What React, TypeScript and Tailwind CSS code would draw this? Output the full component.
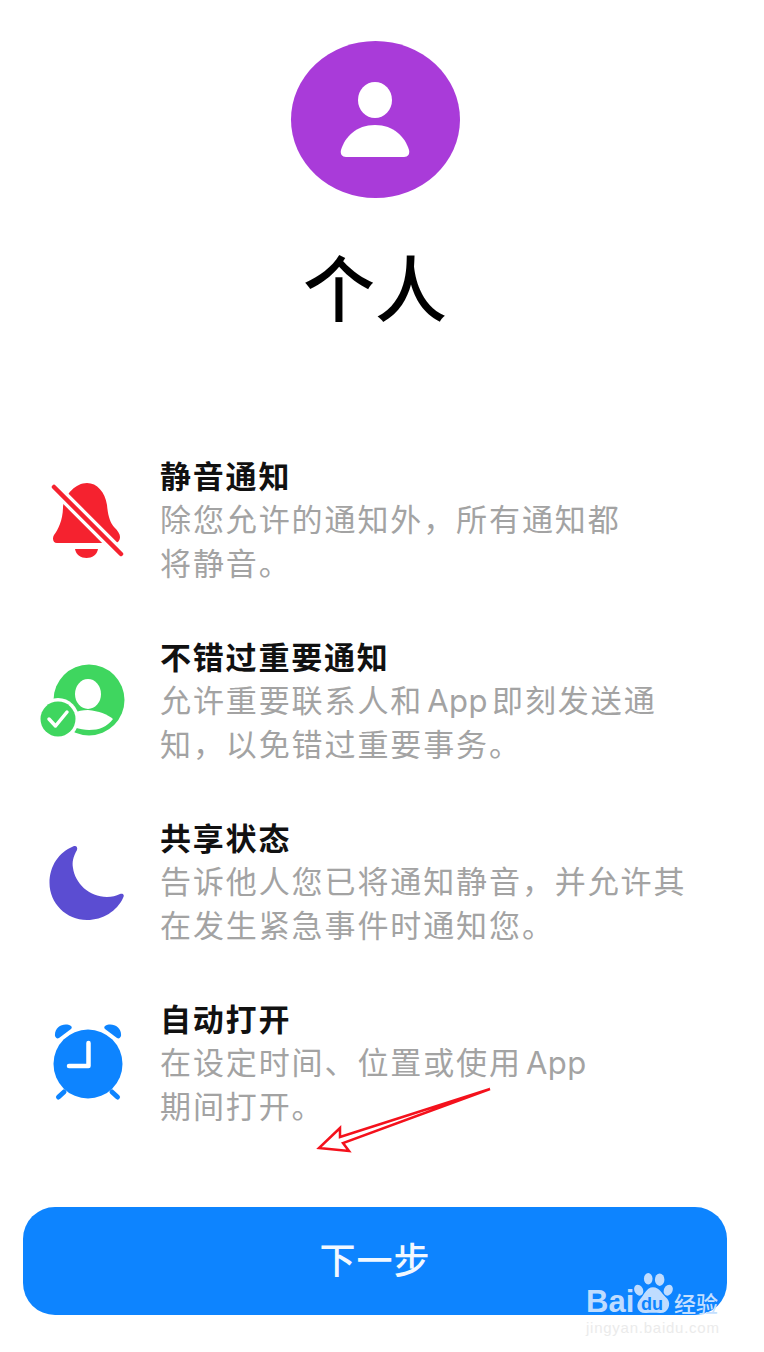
import type { ReactNode } from 'react';

const font = { cjk: "font-['Inter','Noto_Sans_CJK_SC',sans-serif]" };

function BellOff() {
  return (
    <svg width="74" height="80" viewBox="0 0 74 80">
      <path
        d="M37 3C47 3 55 12 57 25C58 36 60 42 64 47C68 51 70 54 70 57C70 60 68 63 65 63H7C3 63 2 58 4 55C8 50 13 40 13 27C15 14 26 3 37 3Z"
        fill="#f5222f"
      />
      <path d="M25 69H48C47 75 42 78 36.500 78C31 78 26 75 25 69Z" fill="#f5222f" />
      <path d="M3 6L71 74" stroke="#fff" strokeWidth="11" />
      <path d="M4 7L71 74" stroke="#f5222f" strokeWidth="4.500" strokeLinecap="round" />
    </svg>
  );
}

function PersonCheck() {
  return (
    <svg width="88" height="76" viewBox="0 0 88 76">
      <circle cx="50" cy="36" r="35.500" fill="#3fd65f" />
      <ellipse cx="49" cy="30" rx="13" ry="15" fill="#fff" />
      <path d="M49 46C60 47 68 50 74 55C68 63 60 66 50 66C41 66 30 62 24 57C30 50 38 46 49 46Z" fill="#fff" />
      <circle cx="19" cy="55" r="21" fill="#fff" />
      <circle cx="19" cy="55" r="17.500" fill="#3fd65f" />
      <path d="M10 55L16.500 62L28 48" fill="none" stroke="#fff" strokeWidth="3.500" strokeLinecap="round" strokeLinejoin="round" />
    </svg>
  );
}

function Moon() {
  return (
    <svg width="76" height="76" viewBox="0 0 76 76">
      <path
        d="M24 1.500C27 0 29 2 28 5C24 12 23 17 24 23C26 38 40 52 58 52C63 52 67 51 71 49C74 48 76 50 74 53C68 66 54 75 38 75C17 75 .5 58 .5 38C.5 21 10 7 24 1.500Z"
        fill="#5b4dd2"
      />
    </svg>
  );
}

function AlarmClock() {
  return (
    <svg width="70" height="78" viewBox="0 0 70 78">
      <path d="M2 13C1 4 11 -1 18 3C19 4 19 5 18 6L6 15C4 16 3 15 2 13Z" fill="#0d84ff" />
      <path d="M68 13C69 4 59 -1 52 3C51 4 51 5 52 6L64 15C66 16 67 15 68 13Z" fill="#0d84ff" />
      <path d="M11 69L5.500 74M59 69L64.500 74" stroke="#0d84ff" strokeWidth="5" strokeLinecap="round" />
      <circle cx="35" cy="41" r="34.500" fill="#0d84ff" />
      <path d="M35.500 20V43H16" fill="none" stroke="#fff" strokeWidth="4.500" strokeLinecap="round" strokeLinejoin="round" />
    </svg>
  );
}

function Arrow() {
  return (
    <svg className="absolute left-[310px] top-[1082px]" width="190" height="78" viewBox="0 0 190 78">
      <path d="M180 7L30 55L30 46L9 66L39 69L33 61Z" fill="none" stroke="#f4111c" strokeWidth="2.500" strokeLinejoin="miter" />
    </svg>
  );
}

function Watermark() {
  return (
    <div className="absolute left-[586px] top-[1272px] w-[140px] font-['Liberation_Sans',sans-serif]">
      <div className="flex items-start">
        <span className="mt-[13px] w-[47px] text-[31px] leading-[34px] font-bold text-[#bfdcff]">Bai</span>
        <div className="relative h-[43px] w-[40px]">
          <svg width="40" height="43" viewBox="0 0 42 45">
            <g fill="#bfdcff">
              <ellipse cx="6" cy="19" rx="4.500" ry="6" transform="rotate(-25 6 19)" />
              <ellipse cx="16" cy="7" rx="4.500" ry="6" />
              <ellipse cx="28" cy="8" rx="5" ry="6.500" />
              <ellipse cx="37" cy="19" rx="4.500" ry="6" transform="rotate(25 37 19)" />
              <path d="M21 16C28 16 31 24 36 28C41 34 36 44 28 43C24 42.500 19 42.500 14 43C5 44 2 35 7 29C12 24 14 16 21 16Z" />
            </g>
          </svg>
          <span className="absolute left-[8px] top-[22px] text-[18px] leading-[20px] font-bold text-[#0d84ff]">du</span>
        </div>
        <span className="mt-[15px] ml-[1px] text-[22px] leading-[30px] font-medium whitespace-nowrap text-[#c4dfff] font-['Noto_Sans_CJK_SC',sans-serif]">
          经验
        </span>
      </div>
      <div className="text-[15px] leading-[18px] tracking-[0.75px] whitespace-nowrap text-[#ebebeb]">
        jingyan.baidu.com
      </div>
    </div>
  );
}

const app = <span className="mx-[4px] tracking-[0.5px]">App</span>;

const rows: { icon: ReactNode; title: string; lines: ReactNode[]; iconClass: string }[] = [
  {
    icon: <BellOff />,
    title: '静音通知',
    lines: ['除您允许的通知外，所有通知都', '将静音。'],
    iconClass: 'ml-[50px] mt-[25px] w-[110px]',
  },
  {
    icon: <PersonCheck />,
    title: '不错过重要通知',
    lines: [<>允许重要联系人和{app}即刻发送通</>, '知，以免错过重要事务。'],
    iconClass: 'ml-[39px] mt-[28px] w-[121px]',
  },
  {
    icon: <Moon />,
    title: '共享状态',
    lines: ['告诉他人您已将通知静音，并允许其', '在发生紧急事件时通知您。'],
    iconClass: 'ml-[49px] mt-[28px] w-[111px]',
  },
  {
    icon: <AlarmClock />,
    title: '自动打开',
    lines: [<>在设定时间、位置或使用{app}</>, '期间打开。'],
    iconClass: 'ml-[53px] mt-[25px] w-[107px]',
  },
];

export default function App() {
  return (
    <div className={`relative h-[1352px] w-[764px] overflow-hidden bg-white ${font.cjk}`}>
      <div className="flex flex-col items-center pt-[41px] pr-[14px]">
        <div className="flex h-[157px] w-[169px] items-center justify-center rounded-[50%] bg-[#a93bd9]">
          <svg width="72" height="76" viewBox="0 0 72 76">
            <ellipse cx="36" cy="18" rx="17" ry="18" fill="#fff" />
            <path d="M36 43C55 43 66 55 70 68C71 72 69 75 65 75H7C3 75 1 72 2 68C6 55 17 43 36 43Z" fill="#fff" />
          </svg>
        </div>
        <h1 className="mt-[42px] text-[72px] leading-[100px] font-medium text-black">个人</h1>
      </div>

      <div className="mt-[115px] flex flex-col gap-[45px]">
        {rows.map((row) => (
          <div key={row.title} className="flex h-[136px]">
            <div className={`shrink-0 ${row.iconClass}`}>{row.icon}</div>
            <div>
              <div className="text-[31px] leading-[43px] font-bold tracking-[1.8px] text-[#111]">{row.title}</div>
              {row.lines.map((line, i) => (
                <div key={i} className="text-[31px] leading-[44px] tracking-[1.9px] whitespace-nowrap text-[#a3a3a3]">
                  {line}
                </div>
              ))}
            </div>
          </div>
        ))}
      </div>

      <button className="mt-[73px] ml-[23px] block h-[108px] w-[704px] rounded-[32px] bg-[#0d84ff] text-[36px] font-medium tracking-[1px] text-[#f2f8ff]">
        下一步
      </button>
      <Arrow />
      <Watermark />
    </div>
  );
}
